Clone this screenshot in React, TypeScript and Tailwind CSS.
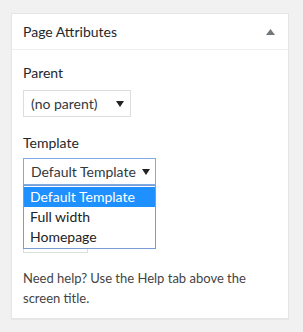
import React from 'react';

const font = { fontFamily: 'Lato, "Noto Sans", sans-serif' };

const Arrow: React.FC = () => (
    <svg width="8" height="6" viewBox="0 0 8 6" className="shrink-0">
        <path d="M0 0 H8 L4 6 Z" fill="#222" />
    </svg>
);

const App: React.FC = () => {
    return (
        <div className="min-h-[332px] w-[303px] bg-[#f1f1f1] pt-[13px] pl-[11px]" style={font}>
            <div className="w-[278px] border border-[#e5e5e5] bg-white shadow-[0_1px_1px_rgba(0,0,0,0.04)]">
                {/* Header */}
                <div className="flex h-[36px] items-center justify-between border-b border-[#eeeeee] pl-[11px] pr-[13px]">
                    <h2 className="text-[14px] text-[#23282d]">Page Attributes</h2>
                    <svg width="9" height="6" viewBox="0 0 9 6">
                        <path d="M4.5 0 L9 6 H0 Z" fill="#72777c" />
                    </svg>
                </div>

                {/* Body */}
                <div className="px-[11px] pt-[13px] pb-[10px] text-[14px] text-[#444]">
                    <p className="h-[20px] leading-[20px] text-[#23282d]">Parent</p>
                    <div className="mt-[7px] flex h-[27px] w-[108px] items-center justify-between border border-[#dddddd] pl-[7px] pr-[6px] text-[#32373c]">
                        <span>(no parent)</span>
                        <Arrow />
                    </div>

                    <p className="mt-[16px] h-[20px] leading-[20px] text-[#23282d]">Template</p>
                    <div className="relative mt-[5px] w-[133px]">
                        <div className="flex h-[27px] items-center justify-between border border-[#7eaae6] pl-[7px] pr-[5px] text-[#32373c]">
                            <span>Default Template</span>
                            <Arrow />
                        </div>
                        {/* Open option list */}
                        <ul className="absolute left-0 top-full z-10 w-[133px] border border-[#7a9cd3] bg-white py-[1px] text-[#222]">
                            <li className="h-[20px] bg-[#1e90ff] pl-[6px] leading-[20px] text-white">Default Template</li>
                            <li className="h-[20px] pl-[6px] leading-[20px]">Full width</li>
                            <li className="h-[20px] pl-[6px] leading-[20px]">Homepage</li>
                        </ul>
                    </div>

                    {/* Order field, mostly hidden by the open list */}
                    <div className="mt-[40px] h-[28px] w-[65px] border border-[#dddddd]" />

                    <p className="mt-[15px] text-[13px] leading-[20px] text-[#444]">
                        Need help? Use the Help tab above the screen title.
                    </p>
                </div>
            </div>
        </div>
    );
};

export default App;
